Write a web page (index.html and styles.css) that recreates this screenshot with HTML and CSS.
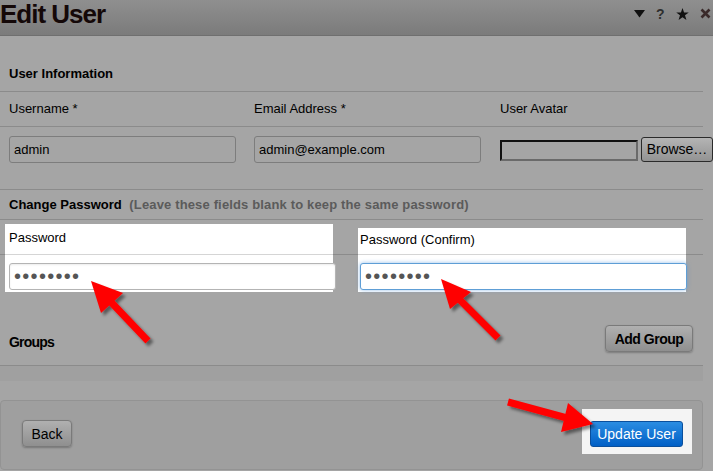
FILE: index.html
```html
<!DOCTYPE html>
<html lang="en">
<head>
    <meta charset="UTF-8">
    <meta name="viewport" content="width=device-width, initial-scale=1.0">
    <title>Edit User</title>
    <link rel="stylesheet" href="styles.css">
</head>
<body>
    <header class="titlebar">
        <h1>Edit User</h1>
        <div class="tools">
            <svg width="11" height="9" viewBox="0 0 11 9"><polygon points="0,1 11,1 5.5,8.5" fill="#111"/></svg>
            <span class="help">?</span>
            <svg width="13" height="12" viewBox="0 0 24 23"><polygon points="12,0 15,8.5 24,8.5 16.8,14 19.5,23 12,17.5 4.5,23 7.2,14 0,8.5 9,8.5" fill="#111"/></svg>
            <svg width="11" height="11" viewBox="0 0 11 11"><path d="M1.5 1.5 L9.5 9.5 M9.5 1.5 L1.5 9.5" stroke="#3a2a2a" stroke-width="2.6"/></svg>
        </div>
    </header>

    <div class="page">
        <!-- User Information -->
        <div class="row head">User Information</div>
        <div class="row labels">
            <span>Username *</span>
            <span>Email Address *</span>
            <span>User Avatar</span>
        </div>
        <div class="row fields">
            <input type="text" class="field" value="admin">
            <input type="text" class="field" value="admin@example.com">
            <div class="avatar">
                <span class="file-box"></span>
                <button type="button" class="browse">Browse…</button>
            </div>
        </div>

        <!-- Change Password -->
        <div class="row head">Change Password <span class="hint">(Leave these fields blank to keep the same password)</span></div>
        <div class="pw-grid">
            <div class="spot">
                <label class="spot-label" for="pw1">Password</label>
                <input type="password" id="pw1" class="pw" value="12345678">
            </div>
            <div class="spot second">
                <label class="spot-label" for="pw2">Password (Confirm)</label>
                <input type="password" id="pw2" class="pw focus" value="12345678">
            </div>
        </div>

        <!-- Groups -->
        <div class="row groups">
            <span class="groups-title">Groups</span>
            <button type="button" class="btn bold">Add Group</button>
        </div>
        <div class="band"></div>

        <div class="actions">
            <button type="button" class="btn back">Back</button>
            <div class="spot-btn">
                <button type="button" class="btn primary">Update User</button>
            </div>
        </div>
    </div>

    <svg class="arrows" width="713" height="471" viewBox="0 0 713 471">
        <defs>
            <filter id="shadow" x="-20%" y="-20%" width="140%" height="140%">
                <feDropShadow dx="3" dy="3" stdDeviation="1.6" flood-color="#000" flood-opacity="0.45"/>
            </filter>
        </defs>
        <g fill="#ff0000" stroke="#ff0000" filter="url(#shadow)">
            <line x1="110" y1="301" x2="148" y2="341" stroke-width="7"/>
            <polygon points="91,281 123,293 101,313" stroke-width="0"/>
            <line x1="459" y1="299" x2="498" y2="338" stroke-width="7"/>
            <polygon points="441,279 471,292 450,309" stroke-width="0"/>
            <line x1="508" y1="402" x2="567" y2="418" stroke-width="7"/>
            <polygon points="593,424 568,403 561,432" stroke-width="0"/>
        </g>
    </svg>
</body>
</html>
```

FILE: styles.css
```css
html {
    overflow: hidden;
}
body {
    font-family: "Liberation Sans", Arial, sans-serif;
    font-size: 13px;
    color: #000;
    background-color: #a5a5a5;
    margin: 0;
    padding: 0;
    position: relative;
    height: 471px;
}
.titlebar {
    height: 35px;
    background: linear-gradient(#8f8f8f, #7b7b7b);
    border-bottom: 1px solid #6f6f6f;
    display: flex;
    justify-content: space-between;
    align-items: flex-start;
}
.titlebar h1 {
    margin: 0;
    font-size: 26px;
    line-height: 28px;
    letter-spacing: -1px;
    color: #140808;
}
.tools {
    display: flex;
    align-items: center;
    gap: 11px;
    height: 27px;
    padding-right: 2px;
}
.tools .help {
    font-weight: bold;
    font-size: 14px;
    color: #2e2e2e;
    width: 9px;
}
.page {
    width: 703px;
    padding-top: 20px;
}
.row {
    border-bottom: 1px solid #8b8b8b;
    padding-left: 9px;
}
.head {
    height: 35px;
    line-height: 35px;
    font-weight: bold;
}
.head + .labels {
    height: 34px;
}
.labels, .fields {
    display: grid;
    grid-template-columns: 245px 246px 1fr;
}
.labels {
    line-height: 34px;
}
.fields {
    height: 53px;
    padding-top: 9px;
    align-items: start;
}
.fields + .head {
    height: 29px;
    line-height: 29px;
}
.hint {
    color: #5b5b5b;
    margin-left: 4px;
    letter-spacing: 0.15px;
}
.field {
    box-sizing: border-box;
    width: 227px;
    height: 27px;
    margin: 0;
    padding: 0 4px;
    font: 13px "Liberation Sans", Arial, sans-serif;
    color: #000;
    background: #a5a5a5;
    border: 1px solid #7d7d7d;
    border-radius: 3px;
}
.avatar {
    display: flex;
    align-items: center;
    gap: 3px;
    height: 26px;
}
.file-box {
    box-sizing: border-box;
    width: 138px;
    height: 21px;
    margin-top: 2px;
    border: 2px solid;
    border-color: #111 #6a6a6a #6a6a6a #111;
}
.browse {
    flex: none;
    width: 72px;
    height: 25px;
    padding: 0;
    font: 14px "Liberation Sans", Arial, sans-serif;
    color: #000;
    background: linear-gradient(#b4b4b4, #939393);
    border: 1px solid #2b2b2b;
    border-radius: 3px;
}
.pw-grid {
    display: flex;
    align-items: flex-start;
    padding: 4px 0 0 5px;
    height: 68px;
    background: linear-gradient(#8b8b8b, #8b8b8b) no-repeat 0 34px / 100% 1px;
}
.spot {
    width: 328px;
    height: 68px;
    background: #fff;
}
.spot.second {
    margin: 4px 0 0 25px;
    height: 64px;
}
.spot-label {
    display: block;
    height: 30px;
    line-height: 27px;
    padding-left: 4px;
    border-bottom: 1px solid #d5d5d5;
}
.second .spot-label {
    height: 26px;
    line-height: 23px;
    padding-left: 2px;
}
.pw {
    box-sizing: border-box;
    display: block;
    width: 327px;
    height: 27px;
    margin: 8px 0 0 4px;
    padding: 0 4px;
    font: 20px "Liberation Sans", Arial, sans-serif;
    letter-spacing: 1.3px;
    color: #555;
    background: #fff;
    border: 1px solid #b4b4b4;
    border-radius: 3px;
    box-shadow: inset 0 1px 2px rgba(0, 0, 0, 0.08);
}
.second .pw {
    margin-left: 2px;
}
.pw.focus {
    border-color: #5e9ed6;
    box-shadow: 0 0 4px rgba(82, 150, 220, 0.6);
}
.groups {
    display: flex;
    justify-content: space-between;
    align-items: center;
    height: 27px;
    padding: 33px 10px 13px 9px;
}
.groups-title {
    font-weight: bold;
    font-size: 14px;
    letter-spacing: -0.8px;
    margin-top: 6px;
}
.band {
    height: 15px;
    background: #a0a0a0;
}
.btn {
    height: 27px;
    padding: 0;
    font: 14px "Liberation Sans", Arial, sans-serif;
    color: #000;
    background: linear-gradient(#b0b0b0, #8f8f8f);
    border: 1px solid #7a7a7a;
    border-radius: 4px;
    box-shadow: 0 1px 2px rgba(0, 0, 0, 0.25);
    cursor: pointer;
}
.btn.bold {
    width: 88px;
    font-weight: bold;
    letter-spacing: -0.5px;
}
.actions {
    margin-top: 19px;
    box-sizing: border-box;
    height: 70px;
    display: flex;
    justify-content: space-between;
    align-items: flex-start;
    padding: 8px 10px 0 21px;
    background: #9f9f9f;
    border: 1px solid #939393;
    border-radius: 4px;
}
.btn.back {
    width: 50px;
    margin-top: 11px;
}
.spot-btn {
    width: 110px;
    height: 45px;
    box-sizing: border-box;
    padding: 12px 0 0 8px;
    background: #f4f4f4;
}
.btn.primary {
    width: 93px;
    height: 26px;
    color: #fff;
    background: linear-gradient(#2b8de2, #005fc6);
    border: 1px solid #0a4f9c;
    border-radius: 3px;
    box-shadow: none;
}
.arrows {
    position: absolute;
    top: 0;
    left: 0;
    pointer-events: none;
}
```
